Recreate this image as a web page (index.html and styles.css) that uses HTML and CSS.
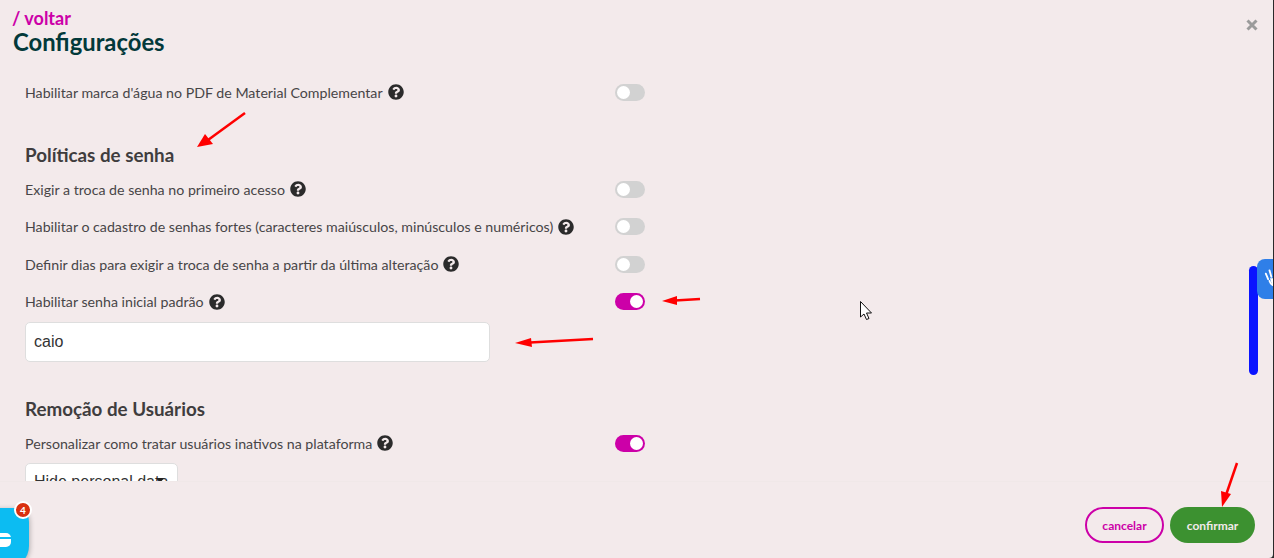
FILE: index.html
```html
<!DOCTYPE html>
<html lang="pt-BR">
<head>
    <meta charset="UTF-8">
    <title>Configurações</title>
    <link rel="stylesheet" href="styles.css">
</head>
<body>
    <div class="modal">
        <header class="modal-header">
            <a class="back" href="#">/ voltar</a>
            <h1>Configurações</h1>
            <svg class="close" viewBox="0 0 12 12"><path d="M1.500 1.500 10.500 10.500M10.500 1.500 1.500 10.500" stroke="#9b9b9b" stroke-width="3" fill="none"/></svg>
        </header>

        <div class="modal-body">
            <div class="row first">
                <span class="label">Habilitar marca d'água no PDF de Material Complementar <svg class="help" viewBox="0 0 512 512"><use href="#help"/></svg></span>
                <span class="switch"></span>
            </div>

            <h2 class="section-one">Políticas de senha</h2>
            <div class="row">
                <span class="label">Exigir a troca de senha no primeiro acesso <svg class="help" viewBox="0 0 512 512"><use href="#help"/></svg></span>
                <span class="switch"></span>
            </div>
            <div class="row">
                <span class="label">Habilitar o cadastro de senhas fortes (caracteres maiúsculos, minúsculos e numéricos) <svg class="help" viewBox="0 0 512 512"><use href="#help"/></svg></span>
                <span class="switch"></span>
            </div>
            <div class="row">
                <span class="label">Definir dias para exigir a troca de senha a partir da última alteração <svg class="help" viewBox="0 0 512 512"><use href="#help"/></svg></span>
                <span class="switch"></span>
            </div>
            <div class="row">
                <span class="label">Habilitar senha inicial padrão <svg class="help" viewBox="0 0 512 512"><use href="#help"/></svg></span>
                <span class="switch on"></span>
            </div>
            <div class="field text-field">caio</div>

            <h2 class="section-two">Remoção de Usuários</h2>
            <div class="row">
                <span class="label">Personalizar como tratar usuários inativos na plataforma <svg class="help" viewBox="0 0 512 512"><use href="#help"/></svg></span>
                <span class="switch on"></span>
            </div>
            <div class="field select-field">Hide personal data<span class="select-arrow"></span></div>
        </div>

        <footer class="modal-footer">
            <button class="btn btn-cancel">cancelar</button>
            <button class="btn btn-confirm">confirmar</button>
        </footer>

        <div class="scrollbar"></div>
        <div class="access-tab">
            <svg viewBox="0 0 24 28" width="22" height="26"><path d="M4.500 13 2 7M8 10.500 6 3.500M11.500 10V2.500M15 11 17 5M6 15c1 3 3 5 6 5h3c3 0 4-3 5-6l2.500-3" fill="none" stroke="#fff" stroke-width="2" stroke-linecap="round"/><path d="M6.500 12h11v8H9z" fill="#fff"/></svg>
        </div>

        <div class="chat">
            <span class="chat-icon"></span>
            <span class="chat-badge">4</span>
        </div>

        <!-- setas de anotacao do print -->
        <svg class="marks" viewBox="0 0 1274 558">
            <g stroke="#f00" stroke-width="2.500" fill="none">
                <path d="M245 113 208 140"/>
                <path d="M700 299 675 300.500"/>
                <path d="M593 339 530 342.500"/>
                <path d="M1237 463 1226 495"/>
            </g>
            <g fill="#f00">
                <path d="M197 147 205 134 213 144z"/>
                <path d="M662 301 677 296 677 305z"/>
                <path d="M515 343 531 338 532 347z"/>
                <path d="M1222 507 1221 491 1231 494z"/>
            </g>
            <path d="M860.500 301.500V317l3.500-3 2.500 5.500 2.500-1-2.500-5.500h5z" fill="#fff" stroke="#111" stroke-width="1"/>
        </svg>

        <svg class="defs" width="0" height="0">
            <symbol id="help" viewBox="0 0 512 512"><path fill="#2b2b2b" d="M504 256c0 137-111 248-248 248S8 393 8 256 119 8 256 8s248 111 248 248zM263 90c-54 0-89 23-116 63-4 5-3 12 3 16l35 26c5 4 13 3 17-2 18-22 30-35 57-35 20 0 45 13 45 33 0 15-12 22-32 33-23 13-54 30-54 71v4c0 7 5 12 12 12h56c7 0 12-5 12-12v-1c0-29 84-30 84-107 0-58-60-101-119-101zm-7 248c-26 0-46 21-46 46s20 46 46 46 46-21 46-46-20-46-46-46z"/></symbol>
        </svg>
    </div>
</body>
</html>
```

FILE: styles.css
```css
* {
    box-sizing: border-box;
}
html, body {
    height: 100%;
}
body {
    margin: 0;
    overflow: hidden;
    background-color: #2a2a2a;
    font-family: Lato, "Noto Sans", Arial, sans-serif;
}
.modal {
    position: relative;
    width: 1273px;
    height: 558px;
    display: flex;
    flex-direction: column;
    overflow: hidden;
    background-color: #f3eaeb;
    border-bottom-right-radius: 4px;
}
.modal-header {
    position: relative;
    height: 69px;
    padding: 9px 13px 0 12px;
}
.back {
    display: block;
    color: #cc00a8;
    font-size: 18px;
    font-weight: 700;
    line-height: 19px;
    text-decoration: none;
}
h1 {
    margin: 0 0 0 1px;
    color: #02393a;
    font-size: 23.800px;
    font-weight: 700;
    line-height: 28px;
}
.close {
    position: absolute;
    top: 19px;
    right: 15px;
    width: 12px;
    height: 12px;
}
.modal-body {
    height: 412px;
    padding: 0 25px;
    overflow: hidden;
    flex: none;
}
.row {
    display: flex;
    justify-content: space-between;
    align-items: center;
    width: 620px;
    height: 20px;
    margin-bottom: 17.500px;
}
.row.first {
    margin-top: 13px;
    margin-bottom: 0;
}
.label {
    display: flex;
    align-items: center;
    gap: 5px;
    color: #474547;
    font-size: 14.200px;
    white-space: nowrap;
}
.help {
    width: 16px;
    height: 16px;
    flex: none;
}
h2 {
    margin: 0;
    color: #3f3d3e;
    font-size: 18.800px;
    font-weight: 700;
    line-height: 24px;
}
.section-one {
    margin-top: 41px;
    margin-bottom: 12px;
}
.section-two {
    margin-top: 35px;
    margin-bottom: 12px;
}
.switch {
    position: relative;
    width: 30px;
    height: 17px;
    border-radius: 9px;
    background-color: #d2d2d2;
}
.switch::after {
    content: "";
    position: absolute;
    top: 2px;
    left: 2px;
    width: 13px;
    height: 13px;
    border-radius: 50%;
    background-color: #fff;
}
.switch.on {
    background-color: #cc00a8;
}
.switch.on::after {
    left: 15px;
}
.field {
    background-color: #fff;
    border: 1px solid #dedede;
    border-radius: 5px;
    color: #333;
    font-family: "Liberation Sans", Arial, sans-serif;
    font-size: 16px;
    padding-left: 8px;
}
.text-field {
    width: 465px;
    height: 40px;
    line-height: 37px;
    margin-top: -7px;
}
.select-field {
    position: relative;
    width: 153px;
    height: 40px;
    line-height: 36px;
    margin-top: -8px;
    white-space: nowrap;
    overflow: hidden;
}
.select-arrow {
    position: absolute;
    top: 14px;
    left: 130px;
    border-top: 5px solid #222;
    border-left: 4px solid transparent;
    border-right: 4px solid transparent;
}
.modal-footer {
    flex: 1;
    display: flex;
    justify-content: flex-end;
    align-items: flex-start;
    gap: 6px;
    padding: 25px 18px 0 0;
    border-top: 1px solid #f0e8e8;
}
.btn {
    height: 36px;
    border-radius: 18px;
    font-family: inherit;
    font-size: 12px;
    font-weight: 700;
}
.btn-cancel {
    width: 79px;
    border: 2px solid #cc00a8;
    background-color: transparent;
    color: #cc00a8;
}
.btn-confirm {
    width: 85px;
    border: none;
    background-color: #3c9130;
    color: #f3eaeb;
}
.scrollbar {
    position: absolute;
    top: 266px;
    left: 1249px;
    width: 9px;
    height: 109px;
    border-radius: 5px;
    background-color: #0a14ff;
}
.access-tab {
    position: absolute;
    top: 259px;
    left: 1257px;
    width: 17px;
    height: 40px;
    padding: 8px 0 0 7px;
    overflow: hidden;
    border-radius: 8px 0 0 8px;
    background-color: #2f7fe8;
}
.chat {
    position: absolute;
    top: 508px;
    left: -30px;
    width: 59px;
    height: 60px;
    border-radius: 0 14px 22px 0;
    background-color: #0cbcf2;
    box-shadow: 1px 1px 5px rgba(0,0,0,0.25);
}
.chat-icon {
    position: absolute;
    top: 25px;
    left: 22px;
    width: 19px;
    height: 14px;
    border-radius: 5px;
    background: linear-gradient(#fff 4px, #0cbcf2 4px, #0cbcf2 6px, #fff 6px);
}
.chat-badge {
    position: absolute;
    top: -7px;
    left: 44px;
    width: 18px;
    height: 18px;
    border: 2px solid #fff;
    border-radius: 50%;
    background-color: #d9300f;
    color: #fff;
    font-size: 10px;
    font-weight: 700;
    line-height: 14px;
    text-align: center;
}
.marks {
    position: absolute;
    top: 0;
    left: 0;
    width: 1274px;
    height: 558px;
    pointer-events: none;
}
.defs {
    position: absolute;
}
```
